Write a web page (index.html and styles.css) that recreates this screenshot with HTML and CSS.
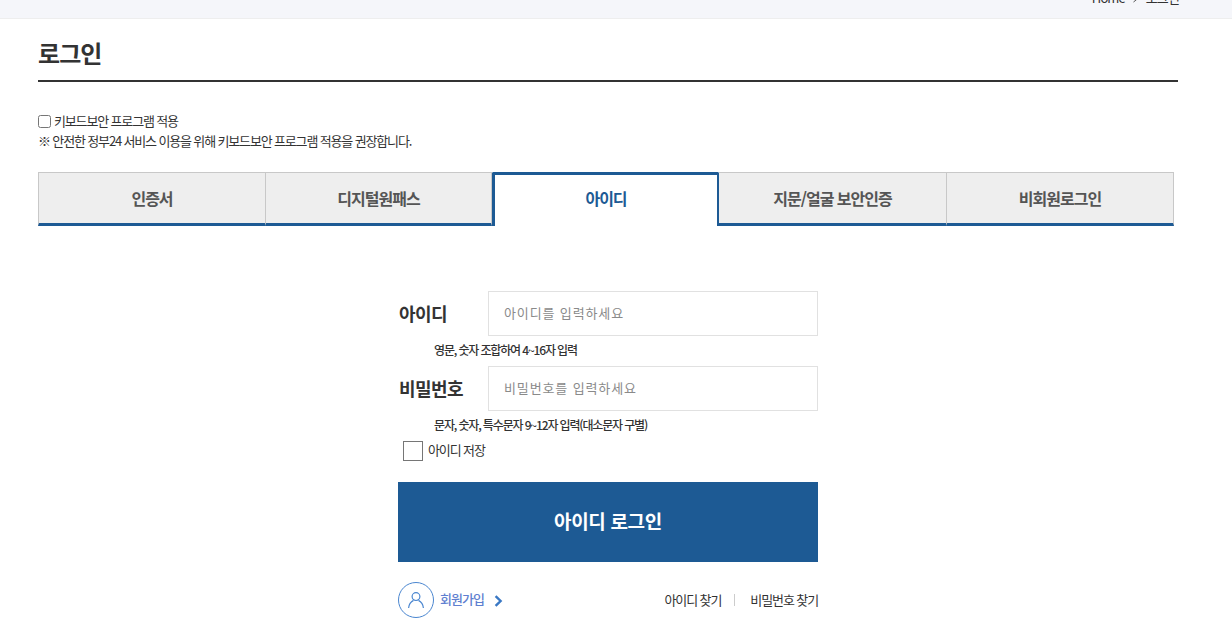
FILE: index.html
```html
<!DOCTYPE html>
<html lang="ko">
<head>
<meta charset="utf-8">
<title>로그인</title>
<link rel="stylesheet" href="styles.css">
</head>
<body>
<header class="topbar">
  <nav class="crumbs"><span>Home</span>
    <svg class="crumb-arrow" width="8" height="10" viewBox="0 0 8 10"><path d="M1.5 1l5 4-5 4" fill="none" stroke="#555" stroke-width="1"/></svg>
    <span>로그인</span></nav>
</header>
<main class="page">
  <h1 class="title">로그인</h1>
  <div class="security">
    <label class="security-row"><input type="checkbox" class="security-check"><span class="security-label">키보드보안 프로그램 적용</span></label>
    <p class="security-note">※ 안전한 정부24 서비스 이용을 위해 키보드보안 프로그램 적용을 권장합니다.</p>
  </div>
  <div class="tabs">
    <a class="tab">인증서</a>
    <a class="tab">디지털원패스</a>
    <a class="tab active">아이디</a>
    <a class="tab">지문/얼굴 보안인증</a>
    <a class="tab">비회원로그인</a>
  </div>
  <form class="form">
    <div class="field">
      <label class="field-label">아이디</label>
      <input class="field-input" placeholder="아이디를 입력하세요">
    </div>
    <p class="hint">영문, 숫자 조합하여 4~16자 입력</p>
    <div class="field">
      <label class="field-label">비밀번호</label>
      <input class="field-input" placeholder="비밀번호를 입력하세요">
    </div>
    <p class="hint">문자, 숫자, 특수문자 9~12자 입력(대소문자 구별)</p>
    <label class="save"><span class="save-box"></span><span class="save-text">아이디 저장</span></label>
    <button type="button" class="submit">아이디 로그인</button>
    <div class="links">
      <a class="join">
        <span class="join-icon">
          <svg width="18" height="18" viewBox="0 0 18 18" fill="none" stroke="#4a86d0" stroke-width="1.2"><circle cx="9" cy="5.6" r="3.9"/><path d="M1.6 17c.4-4 3-6.6 4.9-7.6M16.4 17c-.4-4-3-6.6-4.9-7.6"/></svg>
        </span>
        <span class="join-text">회원가입</span>
        <svg class="join-arrow" width="9" height="12" viewBox="0 0 9 12" fill="none" stroke="#3a78c4" stroke-width="2.4"><path d="M1.6 1.2L6.6 6l-5 4.8"/></svg>
      </a>
      <div class="finds">
        <a>아이디 찾기</a>
        <span class="divider"></span>
        <a>비밀번호 찾기</a>
      </div>
    </div>
  </form>
</main>
</body>
</html>
```
FILE: styles.css
```css
* { box-sizing: border-box; }
html, body { margin: 0; padding: 0; height: 628px; overflow: hidden; background: #fff; }
body { font-family: "Noto Sans CJK KR", "Noto Sans", sans-serif; color: #333; }
p, h1 { margin: 0; }

.topbar {
  height: 19px;
  background: #f5f6fa;
  border-bottom: 1px solid #eeeeee;
  overflow: hidden;
  display: flex;
  justify-content: flex-end;
  align-items: flex-end;
  padding: 0 53px 10px 0;
}
.crumbs {
  display: flex;
  align-items: center;
  gap: 6px;
  font-size: 13px;
  line-height: 20px;
  letter-spacing: -0.9px;
  color: #333;
  flex: none;
}
.crumb-arrow { margin: 0 0 0 1px; }

.page { width: 1140px; margin-left: 38px; }
.title {
  height: 63px;
  border-bottom: 2px solid #333;
  font-size: 24px;
  font-weight: 700;
  line-height: 68px;
  letter-spacing: -0.9px;
  color: #333;
}
.security { margin-top: 30px; font-size: 13px; line-height: 19px; letter-spacing: -1.15px; color: #333; }
.security-row { display: flex; align-items: center; height: 19px; gap: 3px; }
.security-check { width: 13px; height: 13px; margin: 0; }
.security-label { margin-top: -2px; }

.tabs {
  display: grid;
  grid-template-columns: 228px 226px 227px 228px 227px;
  width: 1136px;
  margin-top: 22px;
}
.tab {
  height: 54px;
  display: flex;
  align-items: center;
  justify-content: center;
  background: #eeeeee;
  border: 1px solid #c8c8c8;
  border-left-width: 0;
  border-bottom: 3px solid #1d5a94;
  font-size: 16px;
  font-weight: 700;
  letter-spacing: -1px;
  color: #555;
}
.tab:first-child { border-left-width: 1px; }
.tab.active {
  background: #fff;
  border: 3px solid #1d5a94;
  border-bottom: 0;
  border-right-width: 2px;
  border-radius: 2px 2px 0 0;
  padding-bottom: 5px;
  color: #1d5a94;
}

.form { width: 420px; margin: 65px 0 0 360px; }
.field { display: flex; align-items: center; height: 45px; }
.field-label {
  width: 90px;
  padding: 0 0 2px 1px;
  font-size: 18px;
  font-weight: 700;
  letter-spacing: -0.6px;
  color: #333;
}
.field-input {
  width: 330px;
  height: 45px;
  border: 1px solid #e1e1e1;
  padding: 0 15px 2px;
  font: 13px "Noto Sans CJK KR", sans-serif;
  letter-spacing: 0.87px;
  outline: 0;
  background: #fff;
}
.field-input::placeholder { color: #8a8a8a; opacity: 1; }
.hint {
  height: 30px;
  padding-left: 36px;
  font-size: 12px;
  font-weight: 500;
  line-height: 28px;
  letter-spacing: -1.15px;
  color: #333;
}
.save {
  display: flex;
  align-items: center;
  gap: 5px;
  height: 20px;
  margin-left: 5px;
  font-size: 13px;
  letter-spacing: -1.1px;
  color: #333;
}
.save-box { width: 20px; height: 20px; border: 1px solid #767676; background: #fff; }
.save-text { margin-top: -4px; }
.submit {
  display: block;
  width: 420px;
  height: 80px;
  margin-top: 21px;
  padding: 0 0 4px;
  border: 0;
  background: #1d5a94;
  color: #fff;
  font: 700 19px "Noto Sans CJK KR", sans-serif;
  letter-spacing: -0.35px;
}
.links {
  display: flex;
  justify-content: space-between;
  align-items: center;
  height: 36px;
  margin-top: 20px;
}
.join { display: flex; align-items: center; }
.join-icon {
  width: 36px;
  height: 36px;
  border: 1px solid #4a86d0;
  border-radius: 50%;
  display: flex;
  align-items: center;
  justify-content: center;
}
.join-text {
  margin: -4px 0 0 6px;
  font-size: 13px;
  font-weight: 500;
  letter-spacing: -1px;
  color: #5f7fd0;
}
.join-arrow { margin-left: 10px; margin-top: 2px; }
.finds {
  display: flex;
  align-items: center;
  padding-bottom: 2px;
  font-size: 13px;
  letter-spacing: -1.1px;
  color: #333;
}
.divider { width: 1px; height: 12px; margin: 2px 15px 0 13px; background: #ccc; }
```
